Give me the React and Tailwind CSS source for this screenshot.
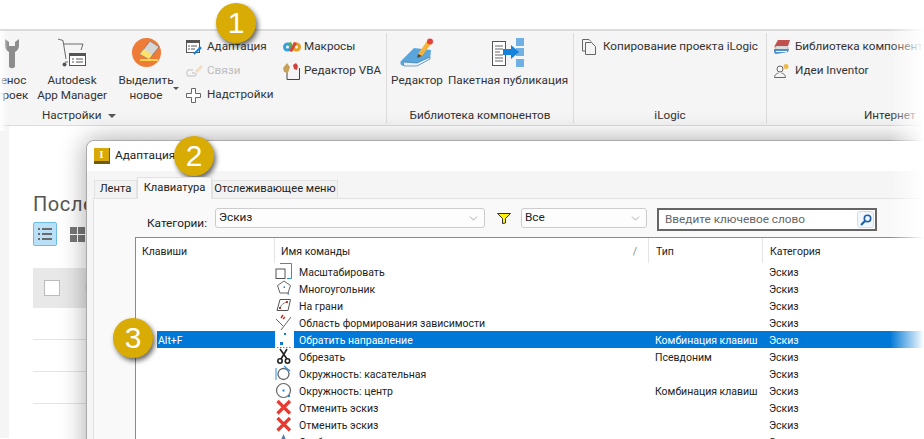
import { ChevronDown } from 'lucide-react'

const IconWrench = () => (
  <svg width="16" height="31" viewBox="0 0 16 31">
    <path d="M1 1 L1 7 C1 11 3 13 5 14 L5 28 C5 31 11 31 11 28 L11 14 C13 13 15 11 15 7 L15 1 L11 4 L11 8 L5 8 L5 4 Z" fill="#8d8d8d" />
  </svg>
)

const IconCart = () => (
  <svg width="28" height="30" viewBox="0 0 28 30" fill="none">
    <path d="M0 1 L5 2.5 L8 21 M6 6 L25 6 L23 12" stroke="#6a6a6a" strokeWidth="1" />
    <path d="M7 24 L10 24" stroke="#6a6a6a" />
    <circle cx="6.5" cy="26.5" r="2" fill="#555" />
    <rect x="11.5" y="15.5" width="16" height="12" fill="#fff" stroke="#555" />
    <rect x="11" y="15" width="17" height="3" fill="#555" />
    <path d="M14 21 h2 M18 21 h7 M14 24 h2 M18 24 h7" stroke="#555" />
  </svg>
)

const IconEraser = () => (
  <svg width="29" height="29" viewBox="0 0 29 29">
    <circle cx="14.5" cy="14.5" r="14.5" fill="#ee7b36" />
    <path d="M8 16 L18 3 L27 9 L17 21 Z" fill="#d6d6d6" stroke="#777" strokeWidth="0.7" />
    <path d="M8 16 L12 11 L20 17 L17 21 Z" fill="#fbe36a" />
    <rect x="8" y="21" width="18" height="2" fill="#fcd34d" />
  </svg>
)

const IconAdapt = () => (
  <svg width="16" height="15" viewBox="0 0 16 15" fill="none">
    <rect x="0.5" y="0.5" width="13" height="12" fill="#fff" stroke="#555" />
    <rect x="0" y="0" width="14" height="3" fill="#555" />
    <path d="M2 6 h2 M5 6 h6 M2 9 h2 M5 9 h4" stroke="#555" />
    <path d="M8 14 L14 8" stroke="#1b7fd6" strokeWidth="2" />
    <circle cx="14" cy="8" r="1.6" fill="#1b7fd6" />
  </svg>
)

const IconLink = () => (
  <svg width="17" height="15" viewBox="0 0 17 15" fill="none">
    <path d="M7 6 H3 C0 6 0 12 3 12 H8 C10 12 10.5 10 10 9 M6 9 H9" stroke="#d0d0d0" strokeWidth="1.3" />
    <path d="M9 7 L15 1 L17 3 L11 9 Z" fill="#f3dcc4" />
  </svg>
)

const IconPlus = () => (
  <svg width="15" height="15" viewBox="0 0 15 15" fill="none">
    <path d="M5.5 0.5 H9.5 V5.5 H14.5 V9.5 H9.5 V14.5 H5.5 V9.5 H0.5 V5.5 H5.5 Z" fill="#fff" stroke="#666" />
  </svg>
)

const IconMacro = () => (
  <svg width="18" height="12" viewBox="0 0 18 12">
    <circle cx="4.5" cy="6" r="4.5" fill="#3aa0d8" />
    <circle cx="13.5" cy="6" r="4.5" fill="#e8a020" />
    <circle cx="4.5" cy="6" r="1.5" fill="#f4f4f4" />
    <circle cx="13.5" cy="6" r="1.5" fill="#f4f4f4" />
    <path d="M6 10 L11 1 L14 2 L9 11 Z" fill="#d8443a" />
    <path d="M5 2 L8 1 L10 5 L7 6 Z" fill="#58b04a" />
  </svg>
)

const IconVba = () => (
  <svg width="17" height="17" viewBox="0 0 17 17" fill="none">
    <path d="M4 5 V16.5 H16.5 V5" stroke="#444" />
    <path d="M0 5 L4 0 L7 4 L5 10 L1 9 Z" fill="#c9a25a" />
    <path d="M10 2 L13 0 L15 3 L14 7 L11 6 Z" fill="#d0413c" />
  </svg>
)

const IconBook = () => (
  <svg width="34" height="29" viewBox="0 0 34 29">
    <path d="M1 23 L14 10 L31 12 L30 21 L17 28 L4 28 C0 28 0 24 1 23 Z" fill="#5aa5dc" />
    <path d="M3 24 L17 25 L30 19 L30 21 L17 28 L4 28 Z" fill="#e9eff4" stroke="#2e6e9e" strokeWidth="0.6" />
    <path d="M18 16 L27 3 L31 6 L22 18 L17 20 Z" fill="#f3b33d" />
    <path d="M17 20 L18 16 L22 18 Z" fill="#444" />
    <circle cx="30" cy="3.5" r="3" fill="#e8413c" />
  </svg>
)

const IconPublish = () => (
  <svg width="32" height="29" viewBox="0 0 32 29" fill="none">
    <rect x="0.5" y="3.5" width="13" height="24" fill="#fff" stroke="#555" />
    <path d="M3 8 h8 M3 11 h8 M3 14 h5 M3 17 h8 M3 20 h8 M3 23 h8" stroke="#666" />
    <rect x="24" y="0" width="8" height="8" fill="#6fb1e4" />
    <rect x="24" y="10" width="8" height="8" fill="#6fb1e4" />
    <rect x="24" y="21" width="8" height="8" fill="#6fb1e4" />
    <path d="M11 11 H19 V7 L27 14 L19 21 V17 H11 Z" fill="#1583dc" />
  </svg>
)

const IconCopy = () => (
  <svg width="14" height="16" viewBox="0 0 14 16" fill="none" stroke="#666">
    <path d="M3.5 12 H0.5 V0.5 H7 L9 2.5" />
    <path d="M3.5 3.5 H9.5 L13.5 7.5 V15.5 H3.5 Z" fill="#f5f5f5" />
  </svg>
)

const IconLib = () => (
  <svg width="16" height="14" viewBox="0 0 16 14">
    <path d="M0 7 L4 0 H16 L14 6 H3 Z" fill="#c0504d" />
    <path d="M1 7 H14 V9 H2 Z" fill="#fff" stroke="#777" strokeWidth="0.5" />
    <path d="M0 9 L3 9 H15 L14 12 L2 14 C0 14 0 11 0 9 Z" fill="#4d90c8" />
    <path d="M2 11 H13 V12 H2 Z" fill="#fff" />
  </svg>
)

const IconIdea = () => (
  <svg width="15" height="14" viewBox="0 0 15 14" fill="none" stroke="#666">
    <circle cx="6" cy="5" r="3" />
    <path d="M0.5 13.5 C1 10 3 9.5 4.5 9 M7.5 9 C9 9.5 11 10 11.5 13.5 H0.5" />
    <circle cx="12" cy="2.5" r="2.5" fill="#f0b84a" stroke="none" />
  </svg>
)

const IconFilter = () => (
  <svg width="14" height="11" viewBox="0 0 14 11">
    <path d="M0.5 0.5 H13.5 L8.5 5.5 V10 L5.5 10.5 V5.5 Z" fill="#fff200" stroke="#333" />
  </svg>
)

const IconSearch = () => (
  <svg width="12" height="12" viewBox="0 0 12 12" fill="none">
    <circle cx="7.5" cy="4.5" r="3.2" stroke="#1d5fa8" strokeWidth="1.6" />
    <path d="M5 7 L1 11" stroke="#1d5fa8" strokeWidth="2.2" />
  </svg>
)

const IconList = () => (
  <svg width="14" height="12" viewBox="0 0 14 12" fill="#6a6a6a">
    <rect x="0" y="0" width="2" height="2" />
    <rect x="4" y="0" width="10" height="2" />
    <rect x="0" y="5" width="2" height="2" />
    <rect x="4" y="5" width="10" height="2" />
    <rect x="0" y="10" width="2" height="2" />
    <rect x="4" y="10" width="10" height="2" />
  </svg>
)

const Cell = ({ children }) => (
  <svg width="18" height="17" viewBox="0 0 18 17" fill="none" className="overflow-visible">
    {children}
  </svg>
)

const rowIcons = {
  scale: (
    <Cell>
      <path d="M5 0.5 H16.5 V15.5 H12" stroke="#2f8fe0" />
      <rect x="1" y="6" width="9" height="9.5" fill="#fff" stroke="#555" />
    </Cell>
  ),
  polygon: (
    <Cell>
      <path d="M9 1 L15.5 5.5 L13 13 H5 L2.5 5.5 Z" stroke="#666" />
      <rect x="8.5" y="6.5" width="1.5" height="1.5" fill="#1b86e0" />
      <rect x="12.5" y="13" width="1.5" height="1.5" fill="#1b86e0" />
    </Cell>
  ),
  face: (
    <Cell>
      <path d="M5 2.5 H15.5 L13 13.5 H2 Z" stroke="#555" />
      <path d="M5 11 C6 8 8 6 12 5" stroke="#888" />
      <rect x="4" y="10" width="2" height="2" fill="#c8302c" />
      <rect x="11" y="4" width="2" height="2" fill="#c8302c" />
    </Cell>
  ),
  region: (
    <Cell>
      <path d="M1 5 L8 12 M16 3 L6 16" stroke="#666" />
      <path d="M6 4 L8 1 M8 5 L10 3" stroke="#c8302c" strokeWidth="1.5" />
    </Cell>
  ),
  flip: (
    <Cell>
      <rect x="9" y="2" width="2" height="2" fill="#0f78d4" />
      <rect x="5" y="11" width="3" height="3" fill="#0f78d4" />
      <path d="M2 16.5 H16" stroke="#2f8fe0" strokeDasharray="1.5 1.5" />
    </Cell>
  ),
  cut: (
    <Cell>
      <path d="M5 1 L12 11 M12 1 L6 11" stroke="#222" strokeWidth="1.6" />
      <circle cx="5" cy="13" r="2.2" stroke="#222" strokeWidth="1.6" />
      <circle cx="12.5" cy="13" r="2.2" stroke="#222" strokeWidth="1.6" />
    </Cell>
  ),
  tangent: (
    <Cell>
      <circle cx="8.5" cy="9" r="5.5" stroke="#666" strokeWidth="1.3" />
      <path d="M1 3 V15" stroke="#2f8fe0" />
      <path d="M9 1 L15 6" stroke="#2f8fe0" strokeWidth="1.2" />
    </Cell>
  ),
  center: (
    <Cell>
      <circle cx="8.5" cy="8.5" r="7" stroke="#666" strokeWidth="1.2" />
      <rect x="7.5" y="7.5" width="2" height="2" fill="#1b86e0" />
      <rect x="13" y="13" width="2" height="2" fill="#1b86e0" />
    </Cell>
  ),
  cancel: (
    <Cell>
      <path d="M2.5 2 L15 14.5 M15 2 L2.5 14.5" stroke="#e53b31" strokeWidth="3.2" />
    </Cell>
  ),
  show: (
    <Cell>
      <path d="M8.5 1 L12 9 H5 Z" fill="#5a7fa8" />
    </Cell>
  ),
}

const rows = [
  { icon: 'scale', name: 'Масштабировать' },
  { icon: 'polygon', name: 'Многоугольник' },
  { icon: 'face', name: 'На грани' },
  { icon: 'region', name: 'Область формирования зависимости' },
  { icon: 'flip', name: 'Обратить направление', keys: 'Alt+F', type: 'Комбинация клавиш', active: true },
  { icon: 'cut', name: 'Обрезать', type: 'Псевдоним' },
  { icon: 'tangent', name: 'Окружность: касательная' },
  { icon: 'center', name: 'Окружность: центр', type: 'Комбинация клавиш' },
  { icon: 'cancel', name: 'Отменить эскиз' },
  { icon: 'cancel', name: 'Отменить эскиз' },
  { icon: 'show', name: 'Отобразить' },
]

function Badge({ n, className }) {
  return (
    <div
      className={`absolute w-[40px] h-[40px] rounded-full bg-[#d9ab05] flex items-center justify-center text-white text-[30px] leading-none font-['Liberation_Sans',sans-serif] shadow-[2px_3px_5px_rgba(0,0,0,0.6)] ${className}`}
    >
      {n}
    </div>
  )
}

function BigButton({ icon, lines, className, iconClass = '' }) {
  return (
    <div className={`flex flex-col items-center shrink-0 pt-[5px] ${className}`}>
      <div className={`h-[35px] flex items-start justify-center ${iconClass}`}>{icon}</div>
      {lines.map((l) => (
        <div key={l} className="leading-[15px] whitespace-nowrap">{l}</div>
      ))}
    </div>
  )
}

function SmallButton({ icon, label, muted }) {
  return (
    <div className="h-[24px] flex items-center whitespace-nowrap">
      <div className="w-[21px] shrink-0 flex items-center">{icon}</div>
      <span className={muted ? 'text-[#bdbdbd]' : ''}>{label}</span>
    </div>
  )
}

function Panel({ width, label, labelClass = 'justify-center', children }) {
  return (
    <div className={`flex flex-col shrink-0 border-r border-[#dcdcdc] my-[2px] ${width}`}>
      <div className="flex-1 flex min-h-0">{children}</div>
      <div className={`h-[17px] pt-[2px] flex items-center gap-[7px] whitespace-nowrap ${labelClass}`}>{label}</div>
    </div>
  )
}

function Ribbon() {
  return (
    <div className="h-[97px] mt-[29px] border-t-2 border-b border-[#dcdcdc] bg-[#f5f5f5] flex text-[#333] text-[11.7px]">
      <Panel
        width="w-[387px]"
        labelClass="pl-[42px]"
        label={
          <>
            Настройки
            <span className="w-0 h-0 border-x-[4px] border-x-transparent border-t-[4px] border-t-[#555]" />
          </>
        }
      >
        <BigButton className="ml-[-24px] w-[54px]" iconClass="ml-[17px]" icon={<IconWrench />} lines={['Перенос', 'настроек']} />
        <BigButton className="ml-[5px] w-[74px]" icon={<IconCart />} lines={['Autodesk', 'App Manager']} />
        <BigButton className="ml-[7px] w-[60px]" icon={<IconEraser />} lines={['Выделить', 'новое']} />
        <div className="w-0 h-0 ml-[-3px] mt-[54px] border-x-[3px] border-x-transparent border-t-[3px] border-t-[#555]" />
        <div className="ml-[7px] w-[97px] pt-[2px]">
          <SmallButton icon={<IconAdapt />} label="Адаптация" />
          <SmallButton icon={<IconLink />} label="Связи" muted />
          <SmallButton icon={<IconPlus />} label="Надстройки" />
        </div>
        <div className="pt-[2px]">
          <SmallButton icon={<IconMacro />} label="Макросы" />
          <SmallButton icon={<IconVba />} label="Редактор VBA" />
        </div>
      </Panel>
      <Panel width="w-[187px]" label="Библиотека компонентов">
        <BigButton className="ml-[5px] w-[50px]" icon={<IconBook />} lines={['Редактор']} />
        <BigButton className="ml-[6px] w-[120px]" icon={<IconPublish />} lines={['Пакетная публикация']} />
      </Panel>
      <Panel width="w-[193px]" label="iLogic">
        <div className="pl-[8px] pt-[2px]">
          <SmallButton icon={<IconCopy />} label="Копирование проекта iLogic" />
        </div>
      </Panel>
      <div className="flex-1 flex flex-col my-[2px] min-w-0 overflow-hidden">
        <div className="flex-1 pl-[7px] pt-[2px]">
          <SmallButton icon={<IconLib />} label="Библиотека компонентов" />
          <SmallButton icon={<IconIdea />} label="Идеи Inventor" />
        </div>
        <div className="h-[17px] pt-[2px] pl-[97px] flex items-center">Интернет</div>
      </div>
    </div>
  )
}

function BackgroundPage() {
  return (
    <div className="flex h-[312px]">
      <div className="w-[9px] bg-[#f5f5f5]" />
      <div className="flex-1 pl-[24px] pt-[63px] bg-white">
        <div className="h-[30px] text-[20px] tracking-[0.6px] leading-[30px] text-[#555] whitespace-nowrap">Последние файлы</div>
        <div className="mt-[3px] flex items-center gap-[13px]">
          <div className="w-[24px] h-[24px] rounded-[2px] bg-[#b9e0f6] border border-[#6dbdea] flex items-center justify-center">
            <IconList />
          </div>
          <div className="grid grid-cols-2 gap-[1px] w-[15px]">
            <div className="h-[7px] bg-[#777]" />
            <div className="h-[7px] bg-[#777]" />
            <div className="h-[7px] bg-[#777]" />
            <div className="h-[7px] bg-[#777]" />
          </div>
        </div>
        <div className="mt-[22px] h-[40px] bg-[#e8e8e8] flex items-center pl-[11px]">
          <div className="w-[16px] h-[16px] bg-white border border-[#bbb]" />
          <span className="ml-[25px] text-[#8a6a40]">Имя</span>
        </div>
        <div className="h-[32px] border-b border-[#e5e5e5]" />
        <div className="h-[32px] border-b border-[#e5e5e5]" />
        <div className="h-[32px] border-b border-[#e5e5e5]" />
      </div>
    </div>
  )
}

function Select({ value, className }) {
  return (
    <div className={`h-[20px] bg-[#fdfdfd] border border-[#cccccc] rounded-[3px] pl-[3px] pr-[4px] flex items-center justify-between ${className}`}>
      <span className="text-[#222]">{value}</span>
      <ChevronDown className="w-[13px] h-[13px] text-[#666]" strokeWidth={1} />
    </div>
  )
}

function Tab({ label, active, width }) {
  return active ? (
    <div className={`h-[22px] ${width} bg-[#f9f9f9] border border-b-0 border-[#e2e2e2] flex items-center justify-center whitespace-nowrap text-[#222] -mb-px z-10`}>
      {label}
    </div>
  ) : (
    <div className={`h-[18px] ${width} bg-[#f2f2f2] border border-b-0 border-[#e2e2e2] flex items-center justify-center whitespace-nowrap text-[#222]`}>
      {label}
    </div>
  )
}

function Dialog() {
  return (
    <div className="absolute left-[86px] top-[140px] w-[900px] h-[340px] bg-[#f5f5f5] border border-[#aaaaaa] rounded-tl-[8px] shadow-[0_0_26px_rgba(0,0,0,0.35)] text-[#222]">
      <div className="h-[30px] bg-white rounded-tl-[8px] flex items-center pl-[7px] gap-[5px]">
        <div className="w-[16px] h-[16px] bg-[#d9a90a] border-b-[3px] border-r-[1px] border-[#6f5a10] flex items-center justify-center text-[10px] leading-none font-bold text-white font-['Liberation_Serif',serif]">
          I
        </div>
        <span>Адаптация</span>
      </div>
      <div className="flex items-end h-[27px] ml-[7px] text-[11.2px]">
        <Tab label="Лента" width="w-[43px]" />
        <Tab label="Клавиатура" width="w-[75px]" active />
        <Tab label="Отслеживающее меню" width="w-[126px]" />
      </div>
      <div className="ml-[6px] h-[300px] bg-[#f9f9f9] border border-[#e2e2e2]">
        <div className="h-[38px] flex items-start pt-[9px]">
          <span className="ml-[53px] w-[68px] leading-[20px] mt-[5px]">Категории:</span>
          <Select value="Эскиз" className="w-[270px]" />
          <div className="ml-[12px] mr-[10px] mt-[5px]"><IconFilter /></div>
          <Select value="Все" className="w-[126px]" />
          <div className="ml-[10px] w-[220px] h-[23px] bg-white border-2 border-[#666] flex items-center justify-between pl-[6px] pr-[1px] text-[#666]">
            <span>Введите ключевое слово</span>
            <div className="w-[17px] h-[17px] rounded-[3px] border border-[#cfdcea] bg-[#f2f7fc] flex items-center justify-center">
              <IconSearch />
            </div>
          </div>
        </div>
        <div className="ml-[41px] h-[260px] bg-white border-l border-t border-[#8a8a90] text-[10.5px]">
          <div className="h-[25px] flex items-center">
            <div className="w-[139px] h-full border-r border-[#e4e4e4] pl-[6px] pt-[2px] flex items-center">Клавиши</div>
            <div className="w-[374px] h-full border-r border-[#e4e4e4] pl-[6px] pt-[2px] pr-[11px] flex items-center justify-between">
              <span>Имя команды</span>
              <span className="text-[#888]">/</span>
            </div>
            <div className="w-[114px] h-full border-r border-[#e4e4e4] pl-[7px] pt-[2px] flex items-center">Тип</div>
            <div className="pl-[7px] pt-[2px]">Категория</div>
          </div>
          {rows.map((r, i) => (
            <div key={i} className="h-[17px] flex items-center leading-[19px] whitespace-nowrap">
              <div className="w-[139px] h-full pl-[21px]">
                {r.keys && <div className="h-full bg-[#0078d7] text-white pl-[1px]">{r.keys}</div>}
              </div>
              <div className="w-[19px] h-full bg-white flex justify-center shrink-0 pr-[2px]">{rowIcons[r.icon]}</div>
              <div className={`flex-1 h-full flex ${r.active ? 'bg-[#0078d7] text-white' : ''}`}>
                <div className="w-[355px] pl-[5px] shrink-0">{r.name}</div>
                <div className="w-[114px] pl-[6px] shrink-0">{r.type}</div>
                <div className="pl-[6px]">Эскиз</div>
              </div>
            </div>
          ))}
        </div>
      </div>
    </div>
  )
}

export default function App() {
  return (
    <div className="relative w-[924px] h-[439px] overflow-hidden bg-white text-[11.8px] font-['Roboto',sans-serif]">
      <Ribbon />
      <BackgroundPage />
      <Dialog />
      <div className="absolute left-0 top-[31px] w-[8px] h-[100px] bg-gradient-to-r from-white to-transparent" />
      <div className="absolute right-0 top-0 bottom-0 w-[34px] bg-gradient-to-r from-transparent to-white" />
      <Badge n="1" className="left-[216px] top-[3px]" />
      <Badge n="2" className="left-[174px] top-[136px]" />
      <Badge n="3" className="left-[113px] top-[318px]" />
    </div>
  )
}
